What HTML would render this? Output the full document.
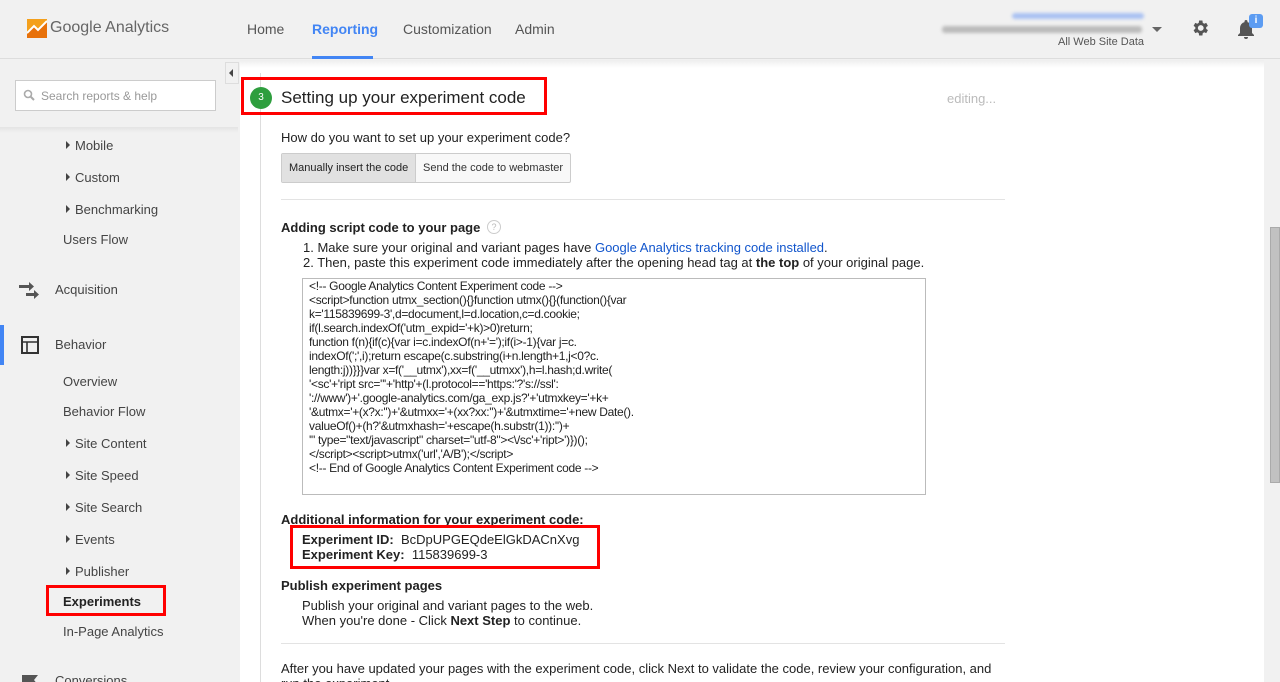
<!DOCTYPE html>
<html><head><meta charset="utf-8"><style>
*{box-sizing:border-box;margin:0;padding:0}
html{width:1280px;height:682px;overflow:hidden}
body{width:1280px;height:682px;overflow:hidden;background:#f1f1f1;font-family:"Liberation Sans",Arial,sans-serif;color:#333;position:relative}
.abs{position:absolute}
.hdr{left:0;top:0;width:1280px;height:59px;background:#f1f1f1;border-bottom:1px solid #ddd}
.nav{top:21px;font-size:14px;color:#555}
.side{font-size:13px;color:#444}
.content{left:240px;top:60px;width:1024px;height:622px;background:#fff}
.t{font-size:13px;color:#222;white-space:nowrap}
.b{font-weight:bold}
.tri{display:inline-block;width:0;height:0;border-left:4px solid #444;border-top:4px solid transparent;border-bottom:4px solid transparent;margin-right:5px;vertical-align:1px}
.code{left:302px;top:278px;width:624px;height:217px;border:1px solid #bbb;font-size:12px;line-height:14px;padding:0 6px;letter-spacing:-0.3px;color:#222;white-space:pre}
</style></head><body>
<div class="abs hdr"></div>
<svg class="abs" style="left:27px;top:19px" width="20" height="19" viewBox="0 0 20 19"><rect width="20" height="19" fill="#f4a01c"/><path d="M0 15 L7 8 L11 12 L20 3 L20 19 L0 19Z" fill="#e8710a"/><path d="M0 14 L7 7 L11 11 L20 2" stroke="#fff" stroke-width="2" fill="none"/></svg>
<div class="abs" style="left:50px;top:19px;font-size:16px;color:#666">Google Analytics</div>
<div class="abs nav" style="left:247px">Home</div>
<div class="abs nav" style="left:312px;color:#4285f4;font-weight:bold">Reporting</div>
<div class="abs" style="left:312px;top:56px;width:61px;height:3px;background:#4285f4"></div>
<div class="abs nav" style="left:403px">Customization</div>
<div class="abs nav" style="left:515px">Admin</div>
<div class="abs" style="left:1012px;top:13px;width:132px;height:6px;background:#a9c1f2;border-radius:3px;filter:blur(1.5px)"></div>
<div class="abs" style="left:942px;top:26px;width:200px;height:7px;background:#bbb;border-radius:3px;filter:blur(1.5px)"></div>
<div class="abs" style="left:1058px;top:36px;font-size:11px;color:#555">All Web Site Data</div>
<div class="abs" style="left:1152px;top:27px;border-top:5px solid #666;border-left:5px solid transparent;border-right:5px solid transparent"></div>
<svg class="abs" style="left:1190px;top:18px" width="20" height="20" viewBox="0 0 24 24"><path fill="#555" d="M19.4 13a7.5 7.5 0 000-2l2.1-1.6-2-3.5-2.5 1a7.3 7.3 0 00-1.7-1L14.9 3h-4l-.4 2.9a7.3 7.3 0 00-1.7 1l-2.5-1-2 3.5L6.4 11a7.5 7.5 0 000 2l-2.1 1.6 2 3.5 2.5-1a7.3 7.3 0 001.7 1l.4 2.9h4l.4-2.9a7.3 7.3 0 001.7-1l2.5 1 2-3.5zM12.9 15.5a3.5 3.5 0 110-7 3.5 3.5 0 010 7z"/></svg>
<svg class="abs" style="left:1236px;top:18px" width="20" height="22" viewBox="0 0 20 22"><path fill="#555" d="M10 2a1.5 1.5 0 00-1.5 1.5v.6A6 6 0 004 10v5l-2 2v1h16v-1l-2-2v-5a6 6 0 00-4.5-5.9v-.6A1.5 1.5 0 0010 2zM8 19a2 2 0 004 0z"/></svg>
<div class="abs" style="left:1249px;top:14px;width:14px;height:14px;background:#5c9cf2;border-radius:3px;color:#fff;font-size:10px;font-weight:bold;text-align:center;line-height:14px">i</div>

<div class="abs" style="left:15px;top:80px;width:201px;height:31px;background:#fff;border:1px solid #ccc"></div>
<svg class="abs" style="left:23px;top:89px" width="12" height="12" viewBox="0 0 12 12"><circle cx="5" cy="5" r="3.5" stroke="#aaa" stroke-width="1.6" fill="none"/><path d="M7.5 7.5L11 11" stroke="#aaa" stroke-width="2"/></svg>
<div class="abs" style="left:41px;top:89px;font-size:12px;color:#999">Search reports &amp; help</div>
<div class="abs" style="left:0;top:127px;width:238px;height:6px;background:linear-gradient(#e4e4e4,#f1f1f1)"></div>
<div class="abs" style="left:225px;top:62px;width:14px;height:22px;background:#f1f1f1;border:1px solid #ddd"></div>
<div class="abs" style="left:229px;top:69px;border-right:4px solid #444;border-top:4px solid transparent;border-bottom:4px solid transparent"></div>
<div class="abs side" style="left:66px;top:138px"><span class="tri"></span>Mobile</div>
<div class="abs side" style="left:66px;top:170px"><span class="tri"></span>Custom</div>
<div class="abs side" style="left:66px;top:202px"><span class="tri"></span>Benchmarking</div>
<div class="abs side" style="left:63px;top:232px">Users Flow</div>
<svg class="abs" style="left:18px;top:279px" width="22" height="22" viewBox="0 0 22 22"><path fill="#555" d="M1 6h10V3l5 4.5-5 4.5V9H1zM8 14h8v-3l5 4.5-5 4.5v-3H8z"/></svg>
<div class="abs side" style="left:55px;top:282px">Acquisition</div>
<div class="abs" style="left:0;top:325px;width:4px;height:40px;background:#4285f4"></div>
<svg class="abs" style="left:21px;top:336px" width="18" height="18" viewBox="0 0 18 18"><rect x="1" y="1" width="16" height="16" fill="none" stroke="#333" stroke-width="2"/><path d="M1 6h16M6 6v11" stroke="#333" stroke-width="1.6"/></svg>
<div class="abs side" style="left:55px;top:337px">Behavior</div>
<div class="abs side" style="left:63px;top:374px">Overview</div>
<div class="abs side" style="left:63px;top:404px">Behavior Flow</div>
<div class="abs side" style="left:66px;top:436px"><span class="tri"></span>Site Content</div>
<div class="abs side" style="left:66px;top:468px"><span class="tri"></span>Site Speed</div>
<div class="abs side" style="left:66px;top:500px"><span class="tri"></span>Site Search</div>
<div class="abs side" style="left:66px;top:532px"><span class="tri"></span>Events</div>
<div class="abs side" style="left:66px;top:564px"><span class="tri"></span>Publisher</div>
<div class="abs" style="left:46px;top:585px;width:120px;height:31px;border:3px solid #f00"></div>
<div class="abs side b" style="left:63px;top:594px;color:#222">Experiments</div>
<div class="abs side" style="left:63px;top:624px">In-Page Analytics</div>
<svg class="abs" style="left:22px;top:673px" width="16" height="12"><path d="M0 2h16l-4 5 4 5H0z" fill="#555"/></svg>
<div class="abs side" style="left:55px;top:673px">Conversions</div>

<div class="abs content"></div>
<div class="abs" style="left:240px;top:60px;width:1024px;height:8px;background:linear-gradient(#eee,#fff)"></div>
<div class="abs" style="left:260px;top:73px;width:1px;height:609px;background:#ddd"></div>
<div class="abs" style="left:1264px;top:60px;width:16px;height:622px;background:#f1f1f1"></div>
<div class="abs" style="left:1270px;top:227px;width:10px;height:256px;background:#c1c1c1;border:1px solid #aaa"></div>
<div class="abs" style="left:241px;top:77px;width:306px;height:38px;border:3px solid #f00"></div>
<div class="abs" style="left:250px;top:87px;width:22px;height:22px;border-radius:50%;background:#2e9e3e;color:#fff;font-size:10px;text-align:center;line-height:22px">3</div>
<div class="abs" style="left:281px;top:88px;font-size:17px;color:#222">Setting up your experiment code</div>
<div class="abs" style="left:947px;top:91px;font-size:13px;color:#bbb">editing...</div>
<div class="abs t" style="left:281px;top:130px">How do you want to set up your experiment code?</div>
<div class="abs" style="left:281px;top:153px;width:290px;height:30px;border:1px solid #ccc;border-radius:2px;background:#f8f8f8"></div>
<div class="abs" style="left:282px;top:154px;width:134px;height:28px;background:#e1e1e1;border-right:1px solid #ccc"></div>
<div class="abs" style="left:289px;top:162px;font-size:11px;color:#222">Manually insert the code</div>
<div class="abs" style="left:423px;top:162px;font-size:11px;color:#333">Send the code to webmaster</div>
<div class="abs" style="left:281px;top:199px;width:724px;height:1px;background:#e3e3e3"></div>
<div class="abs t b" style="left:281px;top:220px">Adding script code to your page</div>
<div class="abs" style="left:487px;top:220px;width:14px;height:14px;border-radius:50%;border:1px solid #ccc;font-size:9px;color:#bbb;text-align:center;line-height:12px">?</div>
<div class="abs t" style="left:303px;top:240px">1. Make sure your original and variant pages have <span style="color:#15c">Google Analytics tracking code installed</span>.</div>
<div class="abs t" style="left:303px;top:255px">2. Then, paste this experiment code immediately after the opening head tag at <b>the top</b> of your original page.</div>
<div class="abs code">&lt;!-- Google Analytics Content Experiment code --&gt;
&lt;script&gt;function utmx_section(){}function utmx(){}(function(){var
k='115839699-3',d=document,l=d.location,c=d.cookie;
if(l.search.indexOf('utm_expid='+k)&gt;0)return;
function f(n){if(c){var i=c.indexOf(n+'=');if(i&gt;-1){var j=c.
indexOf(';',i);return escape(c.substring(i+n.length+1,j&lt;0?c.
length:j))}}}var x=f('__utmx'),xx=f('__utmxx'),h=l.hash;d.write(
'&lt;sc'+'ript src="'+'http'+(l.protocol=='https:'?'s://ssl':
'://www')+'.google-analytics.com/ga_exp.js?'+'utmxkey='+k+
'&amp;utmx='+(x?x:'')+'&amp;utmxx='+(xx?xx:'')+'&amp;utmxtime='+new Date().
valueOf()+(h?'&amp;utmxhash='+escape(h.substr(1)):'')+
'" type="text/javascript" charset="utf-8"&gt;&lt;\/sc'+'ript&gt;')})();
&lt;/script&gt;&lt;script&gt;utmx('url','A/B');&lt;/script&gt;
&lt;!-- End of Google Analytics Content Experiment code --&gt;</div>
<div class="abs t b" style="left:281px;top:512px">Additional information for your experiment code:</div>
<div class="abs" style="left:290px;top:525px;width:310px;height:44px;border:3px solid #f00"></div>
<div class="abs t" style="left:302px;top:532px"><b>Experiment ID:</b>&nbsp; BcDpUPGEQdeElGkDACnXvg</div>
<div class="abs t" style="left:302px;top:547px"><b>Experiment Key:</b>&nbsp; 115839699-3</div>
<div class="abs t b" style="left:281px;top:578px">Publish experiment pages</div>
<div class="abs t" style="left:302px;top:598px">Publish your original and variant pages to the web.</div>
<div class="abs t" style="left:302px;top:613px">When you're done - Click <b>Next Step</b> to continue.</div>
<div class="abs" style="left:281px;top:643px;width:724px;height:1px;background:#e3e3e3"></div>
<div class="abs t" style="left:281px;top:661px">After you have updated your pages with the experiment code, click Next to validate the code, review your configuration, and</div>
<div class="abs t" style="left:281px;top:676px">run the experiment.</div>
</body></html>
